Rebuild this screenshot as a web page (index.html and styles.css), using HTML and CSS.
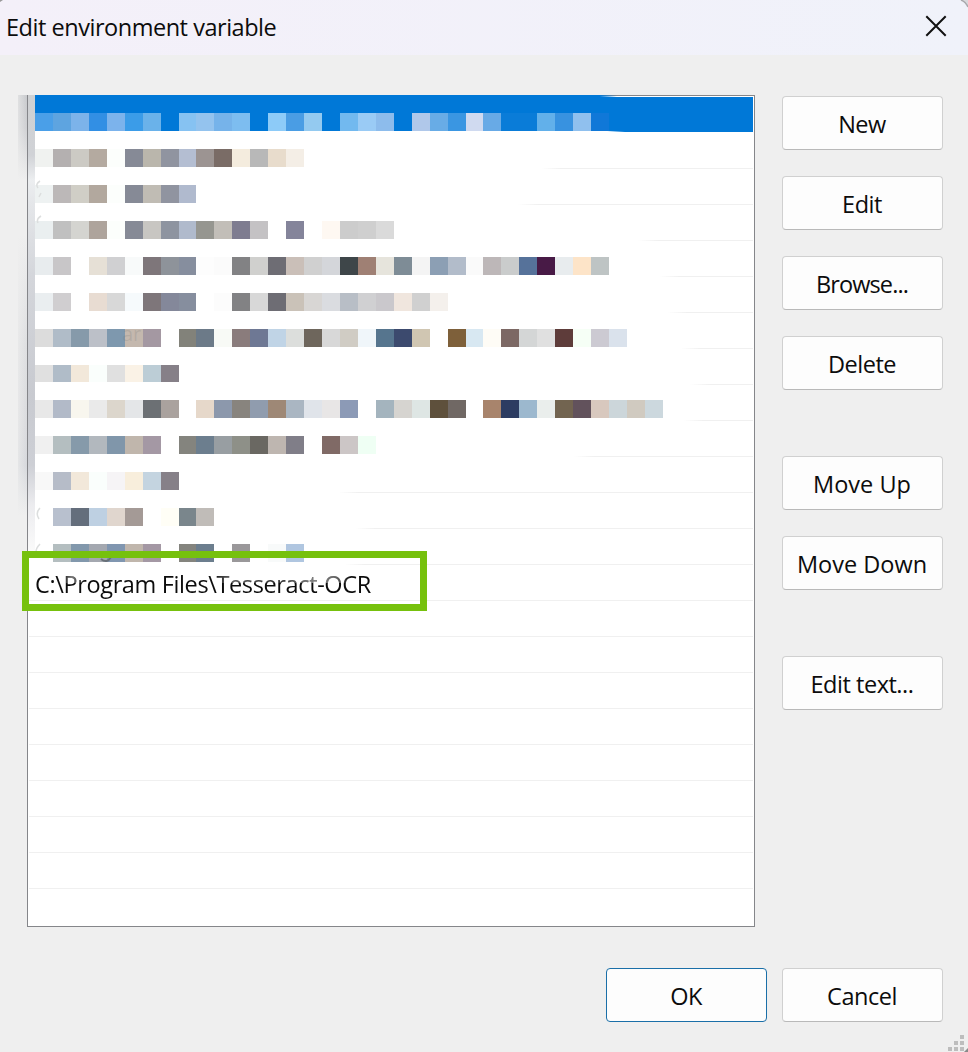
FILE: index.html
```html
<!DOCTYPE html>
<html lang="en">
<head>
<meta charset="utf-8">
<title>Edit environment variable</title>
<link rel="stylesheet" href="styles.css">
</head>
<body>
<div class="dialog">
  <header class="titlebar">
    <span class="label">Edit environment variable</span>
    <svg class="close" width="22" height="22" viewBox="0 0 22 22"><path d="M1.3 1.3L20.7 20.7M20.7 1.3L1.3 20.7"/></svg>
  </header>
  <main class="content">
    <div class="listwrap">
      <div class="list" id="list"></div>
      <div class="smudge smudge-outer"></div>
      <div class="smudge smudge-inner"></div>
      <div class="topstrip"></div>
      <div class="bottomstrip"></div>
      <svg class="traces" width="130" height="480" viewBox="0 0 130 480">
        <path d="M13 86q-5 3-2 7M14 98l-2 4M14 121q-5 3-3 7M13 413q-5 5-1 11M13 449q-4 4-4 8"/>
        <path class="dark" d="M74 464q6 5 10-2"/>
      </svg>
      <span class="ghost">ar</span>
      <div class="highlight"></div>
    </div>
    <div class="actions">
      <button class="btn"><span class="label">New</span></button>
      <button class="btn"><span class="label">Edit</span></button>
      <button class="btn"><span class="label dotted">Browse...</span></button>
      <button class="btn"><span class="label">Delete</span></button>
      <button class="btn group"><span class="label wide">Move Up</span></button>
      <button class="btn"><span class="label wide">Move Down</span></button>
      <button class="btn group"><span class="label">Edit text...</span></button>
    </div>
  </main>
  <footer class="footer">
    <button class="btn primary"><span class="label">OK</span></button>
    <button class="btn"><span class="label">Cancel</span></button>
  </footer>
  <svg class="grip" width="20" height="17" viewBox="0 0 20 17"><path d="M12 0h4v4h-4zM6 6h4v4H6zM12 6h4v4h-4zM0 12h4v4H0zM6 12h4v4H6zM12 12h4v4h-4z"/><path class="edge" d="M20 13L16 17H20z"/></svg>
  <svg class="corner corner-right" width="8" height="8" viewBox="0 0 8 8"><path class="fill" d="M1 0Q6 2 8 7V0z"/><path d="M1 0Q6 2 8 7"/></svg>
  <svg class="corner corner-left" width="3" height="3" viewBox="0 0 3 3"><path class="fill" d="M0 0H3L0 2z"/></svg>
</div>
<script src="list.js"></script>
</body>
</html>
```
FILE: list.js
```js
// Each entry: x where the row divider becomes visible, then the masked cell colours.
const rows = [
  [0, "4a9fe8 5ea4e0 7cb3ea 328fe4 7cb3ec 3b9ce8 6ab2ea - 86c2f2 94c3ee 76b3ea 7dbdf0 - 8dcbf8 4a9de4 94caf0 - 72b9ef 9acbf5 8dbcec - b0c8ea 68ace6 3a96e2 d0daf0 68aae6 0a7cd8 0a7cd8 62b0ea 3892e0 90c0ee 1078d8"],
  [512, "f0f2f0 b4b0b0 cccac4 b4aaa0 fcfefc 868a96 bab6ac 9094a0 b4bed2 9c9492 7a6c66 f4ecde b8b8b8 e8dccc f4eee6"],
  [489, "eef2f2 bcb8b8 d0cec6 b2a89e fcfefc 868a96 c0bcb4 9094a0 b0bace"],
  [609, "eaeff0 c0c0c0 d4d4d0 aea49c fcfefc 868a96 c8c6c2 8e94a0 b0bacc 969690 c2beb8 7e7c90 c4c2c4 - 84849a - fef8f2 cccccc cfcfcf dadada"],
  [630, "e8ecee c8c6c8 - e6e0d6 d0d0d2 f8fafa 7e767a 8e939a 868e9e fdfdfd fbfbfb 828284 d0d0ce 6e6d74 cabfb8 d0d0d0 d4d6da 3e4649 9f8074 e6e4dc 7e8c96 f4f4f4 8c9fb4 b2bcca fafafa bdb7b8 cacccc 56729a 481a46 e8ecee fde4c8 bec4c4"],
  [638, "eaeef0 d0ced0 - e8dcd2 d8d8d8 f6fafc 7e767a 84889a 868e9e - fcfcfc 828284 d8d8d8 6e6d74 cac2b8 d8d6d4 dadce0 b8bec6 d0d0d2 cac8cc f0e6de d0d0d0 f4f0ec"],
  [652, "dcdcdc b0bcc8 869aaa bcc0c8 7e98ae c4b8ae a498a2 - 82827a 6c7a88 f8faf6 8a7c7c 6e7894 c0d4e6 dcdedc 6e665c d8d8d8 d0ccc4 f0f6fa 56758e 3c4a6e d0c6b2 - 7e603a d8e8f2 fefcf6 7c6864 d4d6d6 e0e0e0 5e3c3a f6fff6 cccad2 dae2ec"],
  [661, "e0e0e0 b0bcc8 f2e8da fafefc e0e0e0 faf2e6 bccdd6 868088"],
  [654, "e8e8e8 b2bac8 f8f6ee eaeaea dcd6cc e4e6e8 6c7074 aaa29e - e6d8ca 8c98ac 88847e 909cae 9e8876 aab6c2 e0e4ea e8e6e6 8c9ab6 - a4b4be d6d4d0 dee6e4 5e503c 706864 - a8846c 2c3c62 9cb8ce eaeeec 726450 62525c d8c8be ccd6da d0cac0 ccd8de"],
  [545, "f0f0f0 b4bec0 869aaa b2b8be 8096aa c0b6ac a498a4 - 84847e 6c7e8e 989ea2 8e9088 6a6862 beb6b0 807e88 - 806a66 ccc6c6 effff4"],
  [310, "f8f8f8 b6bcc8 f2e8da fafefc f6f4f6 f8eedc c4d4e0 868088"],
  [326, "- b8c0ce 646e7c bed0e2 e0d6ce a49a96 - fffef6 7a868c c0bcb8"],
  [316, "- b4bec0 8298ac a4a8b0 8096b0 c0b6ac a498a4 - 84847e 6c7e8e - 9a989a - f8fafa b0c6e0"]
];

const list = document.getElementById("list");
for (let i = 0; i < 23; i++) {
  const row = document.createElement("div");
  row.className = "row" + (i === 0 ? " selected" : "") + (i > 7 ? " tight" : "") + (i === 7 ? " short" : "") + (i === 22 ? " last" : "");
  if (i < rows.length) {
    row.style.setProperty("--from", rows[i][0] + "px");
    for (const color of rows[i][1].split(" ")) {
      const cell = document.createElement("i");
      cell.className = "cell";
      if (color !== "-") cell.style.background = "#" + color;
      row.append(cell);
    }
  } else {
    row.classList.add("plain");
    if (i === 13) {
      row.classList.add("entry");
      row.innerHTML = '<span class="label">C:\\Program Files\\Tesseract-OCR</span>';
    }
  }
  list.append(row);
}
```
FILE: styles.css
```css
* { box-sizing: border-box; }
body { margin: 0; background: #efefef; }
.dialog {
  position: relative;
  width: 968px;
  height: 1052px;
  overflow: hidden;
  background: #efefef;
  color: #0c0c0c;
  font: 23.5px/32px "Open Sans", "Noto Sans", sans-serif;
}
.titlebar {
  display: flex;
  align-items: center;
  justify-content: space-between;
  height: 55px;
  padding: 0 21px 2px 6px;
  background: linear-gradient(90deg, #f4f0f9, #f0f2fa);
}
.label { white-space: nowrap; letter-spacing: -0.47px; }
.label.wide { letter-spacing: 0; }
.label.dotted { letter-spacing: -0.9px; }
.close { margin-bottom: 2px; fill: none; stroke: #111; stroke-width: 2; }
.content {
  display: flex;
  gap: 27px;
  padding: 40px 25px 0 27px;
}
.listwrap { position: relative; width: 728px; height: 832px; }
.list {
  height: 832px;
  padding: 1px;
  overflow: hidden;
  border: 1px solid #85868a;
  background: #fff;
}
.row {
  display: flex;
  height: 36px;
  padding: 16px 0 1px 6px;
  background: linear-gradient(90deg, transparent var(--from, 0px), #f0f0f0 calc(var(--from, 0px) + 20px)) 0 100% / 100% 1px no-repeat;
}
.row.plain { background: linear-gradient(#f0f0f0, #f0f0f0) 0 100% / 100% 1px no-repeat; }
.row.last { background: none; }
.row.tight { padding-top: 15px; }
.row.short .cell { height: 17px; }
.row.selected { background: linear-gradient(#0078d7, #0078d7) 0 0 / 100% 35px no-repeat; }
.row.entry { padding: 3px 0 0 6px; }
.row.entry .label {
  letter-spacing: -0.37px;
  color: transparent;
  background: linear-gradient(90deg, transparent 8%, rgba(255, 255, 255, .45) 11%, transparent 15%, transparent 53%, rgba(255, 255, 255, .35) 58%, rgba(255, 255, 255, .15) 72%, rgba(255, 255, 255, .5) 84%, rgba(255, 255, 255, .35) 90%, transparent 94%) 0 0 / 100% 15px no-repeat, #0c0c0c;
  background-clip: text;
  -webkit-background-clip: text;
}
.cell { flex: 0 0 17.95px; height: 18px; }
.topstrip {
  position: absolute;
  left: 8px;
  top: 0;
  width: 582px;
  height: 2px;
  background: linear-gradient(90deg, #0078d7 97%, transparent);
}
.bottomstrip {
  position: absolute;
  left: 8px;
  top: 36px;
  width: 590px;
  height: 1px;
  background: linear-gradient(90deg, #fff 97%, transparent);
}
.smudge { position: absolute; top: 0; }
.smudge-outer {
  left: -9px;
  width: 9px;
  height: 470px;
  background: linear-gradient(90deg, rgba(239, 239, 239, .6), transparent), linear-gradient(#c8cacd, #cecfd2 32px, #efefef 85px, #efefef 140px, #dedfe1 250px, #dadbde 330px, #d6d8dc 370px, #efefef 420px);
}
.smudge-inner {
  left: 1px;
  width: 7px;
  height: 456px;
  background: linear-gradient(#cfd1d3, #d0d2d6 60px, #eceef0 85px, #e4e6e9 110px, #d4d6db 180px, #c8cad0 300px, #cdcfd5 370px, #ececef 410px, #fafafa);
}
.traces { position: absolute; left: 0; top: 0; fill: none; stroke: #dcdede; stroke-width: 1.5; }
.traces .dark { stroke: #687078; stroke-width: 2; }
.ghost {
  position: absolute;
  left: 95px;
  top: 225px;
  font-size: 20px;
  line-height: 28px;
  color: rgba(120, 120, 120, .22);
}
.highlight {
  position: absolute;
  left: -5px;
  top: 456px;
  width: 405px;
  height: 60px;
  border: 7px solid #76c10d;
}
.actions { display: flex; flex-direction: column; gap: 26px; padding-top: 1px; }
.btn {
  display: flex;
  align-items: center;
  justify-content: center;
  width: 161px;
  height: 54px;
  padding: 1px 1px 0 0;
  border: 1px solid #d0d0d0;
  border-bottom-color: #b9b9b9;
  border-radius: 4px;
  background: #fdfdfd;
  color: #0c0c0c;
  font: inherit;
}
.btn.group { margin-top: 40px; }
.btn.primary { border-color: #1a6fa8; }
.footer {
  display: flex;
  justify-content: flex-end;
  gap: 15px;
  padding: 41px 25px 0 0;
}
.grip { position: absolute; right: 0; bottom: 0; fill: #bdbdbd; }
.grip .edge { fill: #8a8a8a; }
.corner { position: absolute; top: 0; fill: none; stroke: #a8a8ac; stroke-width: 1.5; }
.corner .fill { fill: #d8d8dc; stroke: none; }
.corner-right { right: 0; }
.corner-left { left: 0; }
.corner-left .fill { fill: #999; }
```
